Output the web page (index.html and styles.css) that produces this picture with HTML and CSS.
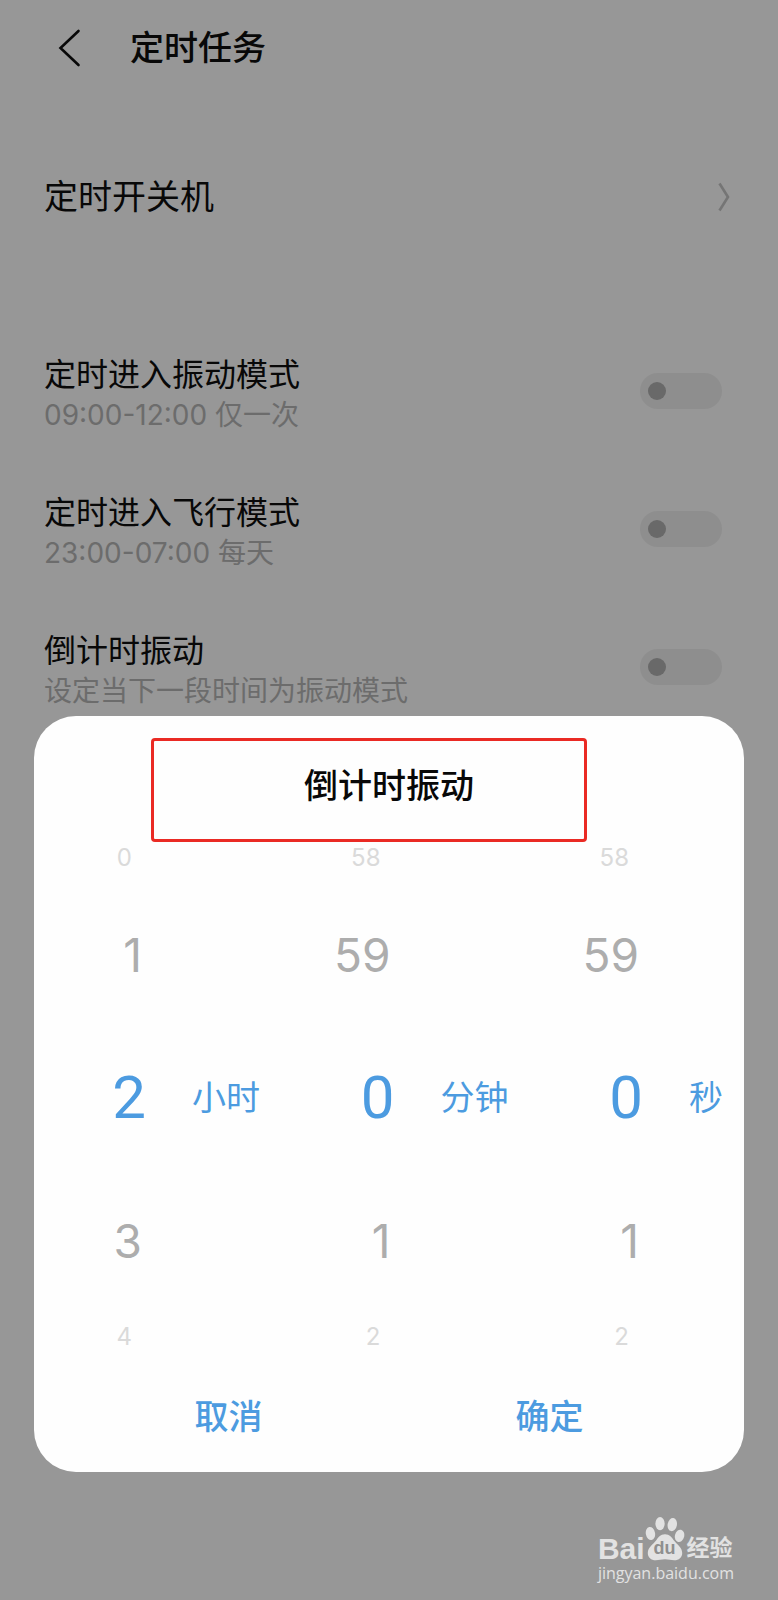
FILE: index.html
```html
<!DOCTYPE html>
<html lang="zh-CN">
<head>
<meta charset="utf-8">
<meta name="viewport" content="width=device-width, initial-scale=1">
<title>定时任务</title>
<link rel="stylesheet" href="styles.css">
</head>
<body>
<main class="page">
  <header class="topbar">
    <button class="back" type="button" aria-label="返回">
      <svg viewBox="0 0 24 38" width="24" height="38" fill="none" stroke="currentColor" stroke-width="2.6" stroke-linecap="round"><path d="M20.5 2 2.5 19 20.5 36"/></svg>
    </button>
    <h1 class="topbar-title">定时任务</h1>
  </header>

  <a class="link-row" href="#power">
    <span>定时开关机</span>
    <svg viewBox="0 0 12 30" width="12" height="30" fill="none" stroke="currentColor" stroke-width="2.6"><path d="M1.5 1.5 10 15 1.5 28.5"/></svg>
  </a>

  <section class="tasks">
    <div class="task">
      <label class="task-text" for="t1"><span class="task-title">定时进入振动模式</span><span class="task-note">09:00-12:00 仅一次</span></label>
      <input class="switch" type="checkbox" role="switch" id="t1">
    </div>
    <div class="task">
      <label class="task-text" for="t2"><span class="task-title">定时进入飞行模式</span><span class="task-note">23:00-07:00 每天</span></label>
      <input class="switch" type="checkbox" role="switch" id="t2">
    </div>
    <div class="task">
      <label class="task-text" for="t3"><span class="task-title">倒计时振动</span><span class="task-note">设定当下一段时间为振动模式</span></label>
      <input class="switch" type="checkbox" role="switch" id="t3">
    </div>
  </section>

  <section class="dialog" role="dialog" aria-labelledby="dialog-title">
    <h2 class="dialog-title" id="dialog-title">倒计时振动</h2>
    <div class="highlight"></div>
    <div class="picker">
      <div class="wheel">
        <span class="far">0</span>
        <span class="near">1</span>
        <span class="current">2</span><span class="unit">小时</span>
        <span class="near">3</span>
        <span class="far">4</span>
      </div>
      <div class="wheel">
        <span class="far">58</span>
        <span class="near">59</span>
        <span class="current">0</span><span class="unit">分钟</span>
        <span class="near">1</span>
        <span class="far">2</span>
      </div>
      <div class="wheel">
        <span class="far">58</span>
        <span class="near">59</span>
        <span class="current">0</span><span class="unit">秒</span>
        <span class="near">1</span>
        <span class="far">2</span>
      </div>
    </div>
    <div class="actions">
      <button class="action" type="button">取消</button>
      <button class="action" type="button">确定</button>
    </div>
  </section>

  <div class="watermark">
    <div class="brand">
      <span class="brand-latin">Bai</span>
      <span class="paw">
        <svg viewBox="190 48 120 136" width="40" height="45" fill="currentColor">
          <ellipse cx="206" cy="101" rx="14" ry="20" transform="rotate(-10 206 101)"/>
          <ellipse cx="235" cy="71" rx="14" ry="20"/>
          <ellipse cx="272" cy="74" rx="14" ry="20" transform="rotate(10 272 74)"/>
          <ellipse cx="294" cy="108" rx="14" ry="19" transform="rotate(14 294 108)"/>
          <path d="M250 103c14 0 21 10 27 19 8 11 25 20 25 38 0 14-10 22-24 22-10 0-17-3-28-3s-18 3-28 3c-14 0-24-8-24-22 0-18 17-27 25-38 6-9 13-19 27-19z"/>
        </svg>
        <span class="paw-text">du</span>
      </span>
      <span class="brand-cn">经验</span>
    </div>
    <div class="site">jingyan.baidu.com</div>
  </div>
</main>
</body>
</html>
```
FILE: styles.css
```css
* { box-sizing: border-box; }

body {
  margin: 0;
  background: #979797;
  color: #080808;
  font-family: Inter, "Noto Sans CJK SC", sans-serif;
}

button {
  padding: 0;
  border: 0;
  background: none;
  color: inherit;
  font: inherit;
}

h1, h2 { margin: 0; }

.page {
  position: relative;
  min-height: 100vh;
}

.topbar {
  display: flex;
  align-items: center;
  gap: 48px;
  height: 96px;
  padding: 0 58px;
}

.back { display: flex; }

.topbar-title {
  font-size: 34px;
  line-height: 48px;
  font-weight: 500;
}

.link-row {
  display: flex;
  align-items: center;
  justify-content: space-between;
  height: 202px;
  margin-bottom: 24px;
  padding: 0 48px 0 44px;
  color: inherit;
  font-size: 34px;
  line-height: 48px;
  text-decoration: none;
}

.link-row svg { color: #757575; }

.task {
  display: flex;
  align-items: center;
  justify-content: space-between;
  height: 138px;
  padding: 0 56px 0 44px;
}

.task-text {
  display: flex;
  flex-direction: column;
  padding-top: 8px;
}

.task-title {
  font-size: 32px;
  line-height: 40px;
}

.task-note {
  color: #6c6c6c;
  font-size: 28px;
  line-height: 40px;
}

.switch {
  appearance: none;
  display: flex;
  align-items: center;
  width: 82px;
  height: 36px;
  margin: 0;
  padding: 0 8px;
  border-radius: 18px;
  background: #8e8e8e;
}

.switch::before {
  content: "";
  width: 18px;
  height: 18px;
  border-radius: 50%;
  background: #696969;
}

.switch:checked { justify-content: flex-end; }

.dialog {
  position: absolute;
  right: 34px;
  bottom: 128px;
  left: 34px;
  border-radius: 42px;
  background: #fefefe;
}

.dialog-title {
  height: 116px;
  padding-top: 46px;
  font-size: 34px;
  line-height: 48px;
  font-weight: 500;
  text-align: center;
}

.highlight {
  position: absolute;
  top: 22px;
  left: 16.5%;
  width: 61.4%;
  height: 104px;
  border: 3px solid #ea2a24;
  border-radius: 4px;
}

.picker {
  display: grid;
  grid-template-columns: 35fr 35fr 30fr;
}

.wheel {
  display: grid;
  grid-template-columns: 112px auto;
  grid-template-rows: 51px 143px 143px 143px 48px;
  column-gap: 46px;
  align-items: center;
  justify-content: start;
  text-align: right;
}

.far, .near, .current { grid-column: 1; }

.far {
  padding-right: 14px;
  color: #dadada;
  font-size: 24px;
}

.near {
  padding-right: 4px;
  color: #adadad;
  font-size: 46px;
}

.current {
  color: #4c9be0;
  font-family: Roboto, sans-serif;
  font-size: 60px;
}

.unit {
  color: #4c9be0;
  font-size: 34px;
  line-height: 48px;
  white-space: nowrap;
}

.actions {
  display: flex;
  height: 112px;
  padding: 0 34px 4px;
}

.action {
  flex: 1;
  color: #4c9be0;
  font-size: 34px;
  font-weight: 500;
}

.watermark {
  position: absolute;
  right: 44px;
  bottom: 19px;
  color: #e2e2e2;
}

.brand {
  display: flex;
  align-items: flex-end;
}

.brand-latin {
  font: bold 30px/32px "Liberation Sans", sans-serif;
}

.paw {
  position: relative;
  display: flex;
  padding-bottom: 4px;
}

.paw-text {
  position: absolute;
  right: 0;
  bottom: 7px;
  left: 0;
  color: #8f8f8f;
  font: bold 18px/20px "Liberation Sans", sans-serif;
  text-align: center;
}

.brand-cn {
  padding-left: 2px;
  font-size: 23px;
  line-height: 34px;
  font-weight: 700;
}

.site {
  font: 16px/16px "Open Sans", sans-serif;
}
```
